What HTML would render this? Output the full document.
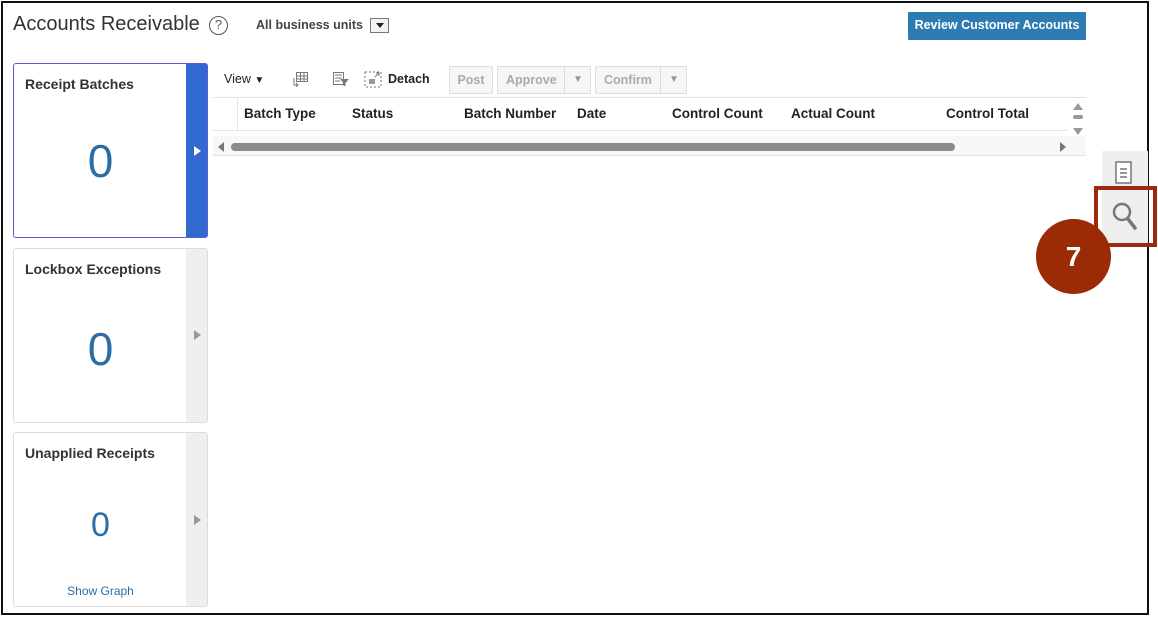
<!DOCTYPE html>
<html><head><meta charset="utf-8"><style>
*{box-sizing:border-box;margin:0;padding:0}
body{width:1158px;height:617px;background:#fff;font-family:"Liberation Sans",Arial,sans-serif;position:relative;overflow:hidden;color:#333}
.frame{position:absolute;left:1px;top:1px;width:1148px;height:614px;border:2px solid #111}
.abs{position:absolute}
.title{left:13px;top:13px;font-size:20px;color:#333}
.help{left:209px;top:16px;width:19px;height:19px;border:1.5px solid #555;border-radius:50%;font-size:13px;text-align:center;line-height:16px;color:#555}
.bu{left:256px;top:18px;font-size:12.5px;font-weight:bold;color:#444}
.dd{left:370px;top:18px;width:19px;height:15px;border:1px solid #777;background:#f3f3f3}
.dd:after{content:"";position:absolute;left:5px;top:4px;border-left:4px solid transparent;border-right:4px solid transparent;border-top:5px solid #222}
.btn{left:908px;top:12px;width:178px;height:28px;background:#2e7ab3;color:#fff;font-size:12.5px;font-weight:bold;text-align:center;line-height:27px;border-radius:1px}
.card{position:absolute;left:13px;width:195px;border:1px solid #ddd;border-radius:3px;background:#fff}
.card .side{position:absolute;right:0;top:0;bottom:0;width:21px;background:#efefef}
.card h3{position:absolute;left:11px;top:12px;font-size:14px;font-weight:bold;color:#333}
.card .n{position:absolute;left:0;width:173px;text-align:center;color:#2b6ea6;font-weight:normal}
.tri{position:absolute;right:6px;border-top:5px solid transparent;border-bottom:5px solid transparent;border-left:7px solid #999}
.tb{font-size:12.5px;color:#222}
.gbtn{position:absolute;top:66px;height:28px;border:1px solid #ddd;background:#f6f6f6;color:#aaa;font-size:12.5px;font-weight:bold;line-height:26px;border-radius:2px}
.th{position:absolute;top:106px;font-size:13.5px;font-weight:bold;color:#222}
</style></head><body>
<div class="frame"></div>
<div class="abs title">Accounts Receivable</div>
<div class="abs help">?</div>
<div class="abs bu">All business units</div>
<div class="abs dd"></div>
<div class="abs btn">Review Customer Accounts</div>

<div class="card" style="top:63px;height:175px;border:1px solid #5b5bd6">
 <div class="side" style="background:#3169d0;width:21px"></div>
 <h3>Receipt Batches</h3>
 <div class="n" style="top:70px;font-size:46px">0</div>
 <div class="tri" style="top:82px;border-left-color:#fff"></div>
</div>
<div class="card" style="top:248px;height:175px">
 <div class="side"></div>
 <h3>Lockbox Exceptions</h3>
 <div class="n" style="top:73px;font-size:46px">0</div>
 <div class="tri" style="top:81px"></div>
</div>
<div class="card" style="top:432px;height:175px">
 <div class="side"></div>
 <h3>Unapplied Receipts</h3>
 <div class="n" style="top:73px;font-size:34px">0</div>
 <div class="tri" style="top:82px"></div>
 <div style="position:absolute;left:0;width:173px;top:151px;text-align:center;font-size:12px;color:#2b6ea6">Show Graph</div>
</div>

<div class="abs tb" style="left:224px;top:72px">View <span style="font-size:10px">&#9660;</span></div>
<svg class="abs" style="left:291px;top:71px" width="18" height="16"><g stroke="#777" fill="none" stroke-width="1"><rect x="5.5" y="1.5" width="11" height="9"/><path d="M5.5 5h11M5.5 8h11M9.5 1.5v9M13 1.5v9M3 7v7h4M5 12l2 2-2 2"/></g></svg>
<svg class="abs" style="left:332px;top:71px" width="18" height="16"><g stroke="#777" fill="none"><rect x="1.5" y="1.5" width="10" height="12"/><path d="M3 4h7M3 7h7M3 10h5"/></g><path d="M8 8h9l-3.5 4v3h-2v-3z" fill="#777"/></svg>
<svg class="abs" style="left:364px;top:71px" width="18" height="17"><rect x="1" y="1" width="16" height="15" fill="none" stroke="#777" stroke-dasharray="2 2"/><rect x="5" y="8" width="6" height="5" fill="#999"/><path d="M11 6l4-4M12 2h3v3" stroke="#777" fill="none"/></svg>
<div class="abs tb" style="left:388px;top:72px;font-weight:bold">Detach</div>
<div class="gbtn" style="left:449px;width:44px;text-align:center">Post</div>
<div class="gbtn" style="left:497px;width:94px"><span style="padding-left:8px">Approve</span><span style="position:absolute;left:66px;top:0;bottom:0;border-left:1px solid #ddd;width:27px;text-align:center;font-size:10px;color:#999">&#9660;</span></div>
<div class="gbtn" style="left:595px;width:92px"><span style="padding-left:8px">Confirm</span><span style="position:absolute;left:64px;top:0;bottom:0;border-left:1px solid #ddd;width:27px;text-align:center;font-size:10px;color:#999">&#9660;</span></div>

<div class="abs" style="left:213px;top:97px;width:873px;height:1px;background:#e3e3e3"></div>
<div class="abs" style="left:237px;top:98px;width:1px;height:32px;background:#e3e3e3"></div>
<div class="abs" style="left:213px;top:130px;width:855px;height:1px;background:#e3e3e3"></div>
<div class="th" style="left:244px">Batch Type</div>
<div class="th" style="left:352px">Status</div>
<div class="th" style="left:464px">Batch Number</div>
<div class="th" style="left:577px">Date</div>
<div class="th" style="left:672px">Control Count</div>
<div class="th" style="left:791px">Actual Count</div>
<div class="th" style="left:946px">Control Total</div>
<div class="abs" style="left:1073px;top:103px;border-left:5px solid transparent;border-right:5px solid transparent;border-bottom:7px solid #999"></div>
<div class="abs" style="left:1073px;top:115px;width:10px;height:4px;border-radius:2px;background:#999"></div>
<div class="abs" style="left:1073px;top:128px;border-left:5px solid transparent;border-right:5px solid transparent;border-top:7px solid #999"></div>
<div class="abs" style="left:213px;top:136px;width:873px;height:20px;background:#f7f7f7;border-bottom:1px solid #e3e3e3"></div>
<div class="abs" style="left:218px;top:142px;border-top:5px solid transparent;border-bottom:5px solid transparent;border-right:6px solid #777"></div>
<div class="abs" style="left:231px;top:143px;width:724px;height:8px;border-radius:4px;background:#8a8a8a"></div>
<div class="abs" style="left:1060px;top:142px;border-top:5px solid transparent;border-bottom:5px solid transparent;border-left:6px solid #777"></div>

<div class="abs" style="left:1102px;top:151px;width:46px;height:93px;background:#efefef"></div>
<svg class="abs" style="left:1114px;top:160px" width="20" height="26"><rect x="2" y="2" width="15" height="21" fill="#fff" stroke="#777" stroke-width="1.5"/><path d="M6 9h7M6 13h7M6 17h7" stroke="#777" stroke-width="1.5"/></svg>
<div class="abs" style="left:1094px;top:186px;width:63px;height:61px;border:4px solid #9b2a10"></div>
<svg class="abs" style="left:1110px;top:200px" width="30" height="36"><circle cx="12" cy="12" r="8" fill="none" stroke="#777" stroke-width="2.5"/><path d="M18 19l7 9" stroke="#777" stroke-width="3.5" stroke-linecap="round"/></svg>
<div class="abs" style="left:1036px;top:219px;width:75px;height:75px;border-radius:50%;background:#9b2a06;color:#fff;font-size:28px;font-weight:bold;text-align:center;line-height:75px">7</div>
</body></html>
